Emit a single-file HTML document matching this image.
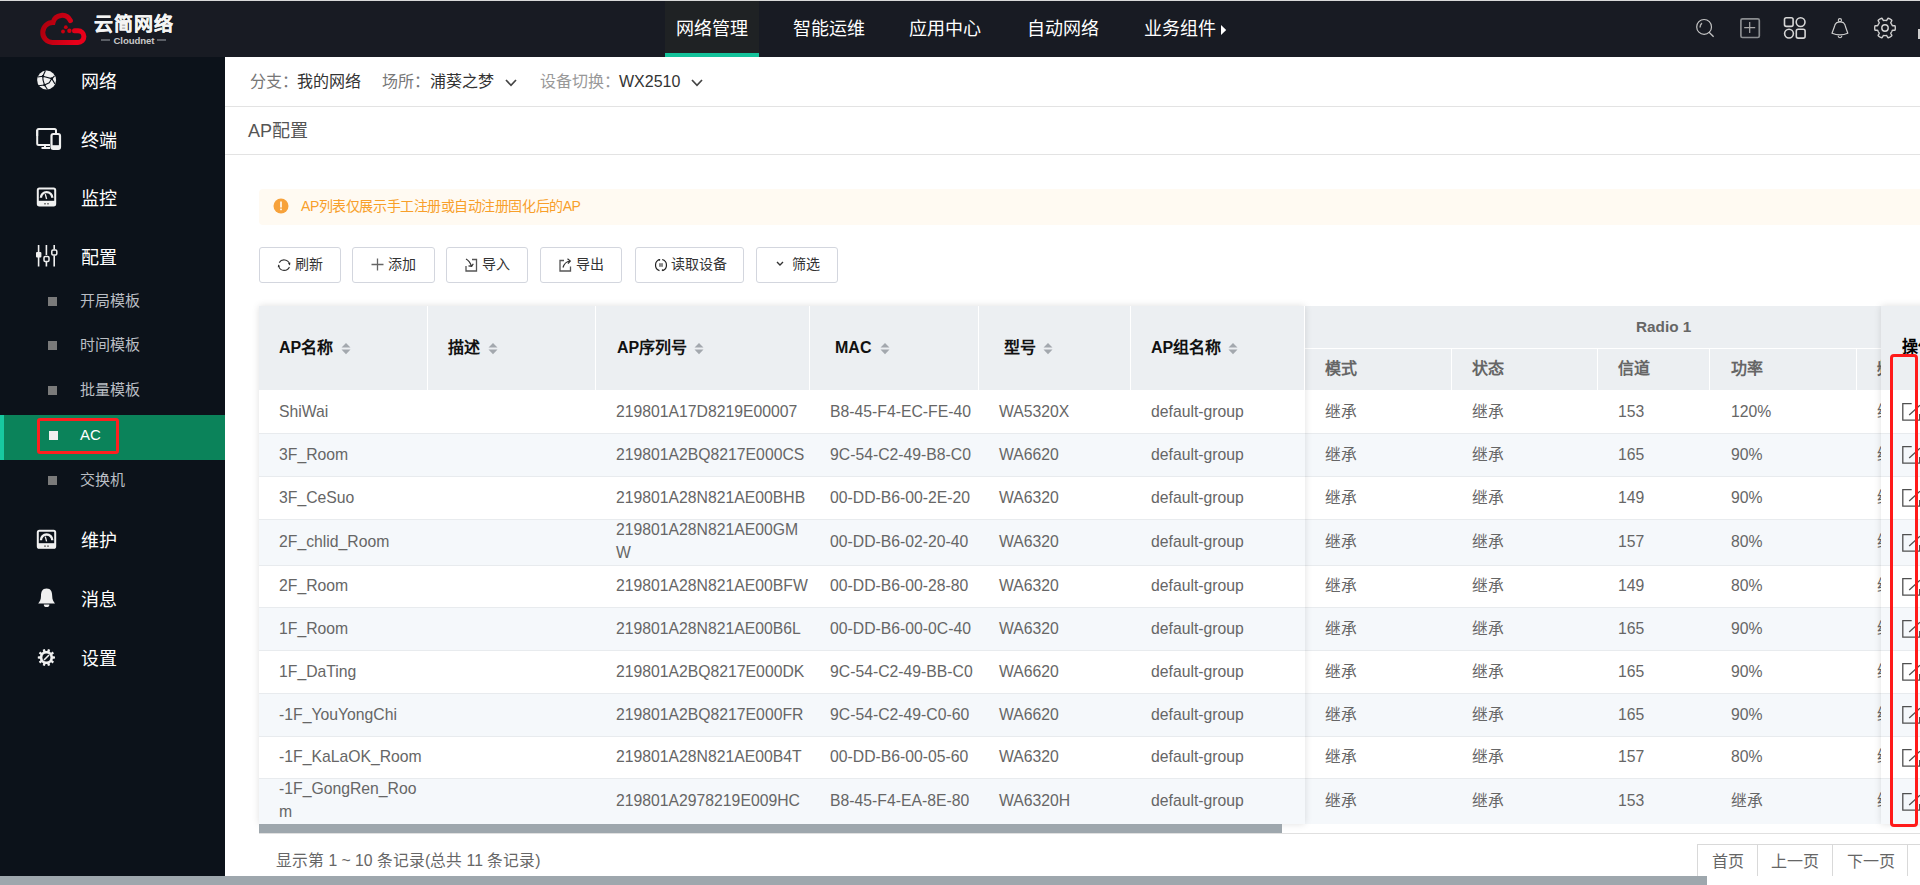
<!DOCTYPE html>
<html lang="zh-CN"><head><meta charset="utf-8"><style>
*{box-sizing:border-box;margin:0;padding:0}
html,body{width:1920px;height:885px;overflow:hidden;background:#fff;font-family:"Liberation Sans",sans-serif}
.a{position:absolute;white-space:nowrap}
.nav{font-size:18px;color:#fff;line-height:20px}
.mi{font-size:18px;color:#fff;line-height:20px}
.si{font-size:15px;color:#babec4;line-height:20px}
.bul{width:8px;height:8px;background:#777}
.bc{font-size:16px;line-height:20px}
.btn{height:36px;border:1px solid #d3d6de;border-radius:3px;background:#fff}
.bt{font-size:14px;color:#333;line-height:20px}
.hd{font-size:16px;font-weight:bold;color:#111;line-height:20px}
.hs{font-size:16px;font-weight:bold;color:#666;line-height:20px}
.c{font-size:15.75px;color:#666;line-height:20px}
.c2{font-size:15.75px;color:#666;line-height:22.5px}
</style></head><body>
<div class="a" style="left:0px;top:0px;width:1920px;height:1px;background:#d9d9d9"></div>
<div class="a" style="left:0px;top:1px;width:1920px;height:56px;background:#181b23"></div>
<svg class="a" style="left:36px;top:9px;" width="54" height="40" viewBox="36 9 54 40"><defs><linearGradient id="lg" x1="0" y1="0" x2="1" y2="0.3"><stop offset="0" stop-color="#a8000c"/><stop offset="1" stop-color="#e8001a"/></linearGradient></defs><path d="M70.4,20.6 A9.3,9.3 0 0 0 53,22.5 A10,10 0 0 0 52.5,42.5 L78,42.5 A5.9,5.9 0 0 0 78,30.7 L74.5,30.7" fill="none" stroke="url(#lg)" stroke-width="5" stroke-linecap="round"/><circle cx="63" cy="31.5" r="1.9" fill="#c8000f"/><circle cx="65.8" cy="27.2" r="1.9" fill="#c8000f"/><circle cx="69.4" cy="30.8" r="2.2" fill="#d0000f"/></svg>
<div class="a " style="left:93.5px;top:13.5px;font-size:19px;font-weight:bold;color:#f4f4f4;line-height:22px;letter-spacing:1.2px;-webkit-text-stroke:0.2px #f4f4f4">云简网络</div>
<div class="a" style="left:101px;top:39px;width:9px;height:2px;background:#5b5f66"></div>
<div class="a" style="left:157px;top:39px;width:9px;height:2px;background:#5b5f66"></div>
<div class="a " style="left:113.5px;top:34.5px;font-size:9.6px;font-weight:bold;color:#c8c8c8;line-height:12px;letter-spacing:-0.1px">Cloudnet</div>
<div class="a" style="left:665px;top:1px;width:94px;height:56px;background:#1f2224"></div>
<div class="a" style="left:665px;top:53px;width:94px;height:4px;background:#13c29a"></div>
<div class="a nav" style="left:676px;top:19px;">网络管理</div>
<div class="a nav" style="left:793px;top:19px;">智能运维</div>
<div class="a nav" style="left:909px;top:19px;">应用中心</div>
<div class="a nav" style="left:1027px;top:19px;">自动网络</div>
<div class="a nav" style="left:1144px;top:19px;">业务组件</div>
<svg class="a" style="left:1220px;top:24px;" width="9" height="12" viewBox="0 0 9 12"><path d="M1,1 L6.2,5.9 L1,11 Z" fill="#fff"/></svg>
<svg class="a" style="left:1690px;top:10px;" width="230" height="40" viewBox="1690 10 230 40"><circle cx="1704.1" cy="26.9" r="7.4" style="fill:none;stroke:#c4c4c4;stroke-width:1.2"/><path d="M1708.8,32 L1713.6,36.7" style="fill:none;stroke:#c4c4c4;stroke-width:1.3"/><path d="M1700,27.5 Q1700.2,24.4 1702,23.2" style="fill:none;stroke:#b0b0b0;stroke-width:1.4"/><rect x="1740.9" y="18.9" width="18.4" height="18.6" rx="1.6" style="fill:none;stroke:#8a8d90;stroke-width:1.7"/><path d="M1744.2,27.7 H1755.2 M1749.7,22.1 V32.9" style="fill:none;stroke:#a8a8a8;stroke-width:1.2"/><rect x="1784.5" y="17.8" width="8.6" height="8.6" rx="1.8" style="fill:none;stroke:#d6d6d6;stroke-width:1.4;stroke-width:1.6"/><circle cx="1800.6" cy="22.1" r="4.4" style="fill:none;stroke:#d6d6d6;stroke-width:1.4;stroke-width:1.6"/><circle cx="1789" cy="33.6" r="4.4" style="fill:none;stroke:#d6d6d6;stroke-width:1.4;stroke-width:1.6"/><rect x="1796.3" y="29.3" width="8.8" height="8.8" rx="1.8" style="fill:none;stroke:#d6d6d6;stroke-width:1.4;stroke-width:1.6"/><path d="M1836.8,22.6 Q1840,21.2 1843.4,22.6 Q1845.2,24 1845.6,27 L1847.8,33.2 Q1840,36.6 1832,33.2 L1834.3,27 Q1834.8,24 1836.8,22.6 Z" style="fill:none;stroke:#cfcfcf;stroke-width:1.2;stroke-linejoin:round"/><circle cx="1839.9" cy="20.2" r="1.6" style="fill:none;stroke:#cfcfcf;stroke-width:1.1"/><path d="M1838.1,35.8 A1.9,1.9 0 0 0 1841.9,35.8" style="fill:none;stroke:#cfcfcf;stroke-width:1.1"/><circle cx="1885" cy="28" r="3.2" style="fill:none;stroke:#d6d6d6;stroke-width:1.4;stroke-width:1.4"/></svg>
<svg class="a" style="left:1870px;top:14px;" width="30" height="28" viewBox="1870 14 30 28"><path d="M1895.30,28.00 L1895.30,28.27 L1895.29,28.54 L1895.27,28.81 L1895.24,29.08 L1895.21,29.34 L1895.17,29.61 L1895.10,29.87 L1894.96,30.12 L1894.56,30.30 L1893.65,30.32 L1892.73,30.29 L1892.34,30.38 L1892.19,30.55 L1892.10,30.73 L1892.02,30.91 L1891.94,31.09 L1891.86,31.27 L1891.77,31.45 L1891.68,31.63 L1891.58,31.80 L1891.48,31.97 L1891.37,32.14 L1891.26,32.30 L1891.15,32.47 L1891.03,32.63 L1890.91,32.79 L1890.80,32.95 L1890.74,33.16 L1890.85,33.55 L1891.33,34.33 L1891.77,35.13 L1891.81,35.57 L1891.67,35.81 L1891.48,36.00 L1891.27,36.17 L1891.05,36.33 L1890.83,36.49 L1890.61,36.64 L1890.38,36.78 L1890.15,36.92 L1889.91,37.05 L1889.68,37.18 L1889.43,37.30 L1889.19,37.41 L1888.94,37.51 L1888.69,37.61 L1888.43,37.68 L1888.15,37.68 L1887.79,37.43 L1887.32,36.65 L1886.88,35.84 L1886.60,35.55 L1886.39,35.50 L1886.19,35.51 L1885.99,35.54 L1885.79,35.56 L1885.60,35.58 L1885.40,35.59 L1885.20,35.60 L1885.00,35.60 L1884.80,35.60 L1884.60,35.59 L1884.40,35.58 L1884.21,35.56 L1884.01,35.54 L1883.81,35.51 L1883.61,35.50 L1883.40,35.55 L1883.12,35.84 L1882.68,36.65 L1882.21,37.43 L1881.85,37.68 L1881.57,37.68 L1881.31,37.61 L1881.06,37.51 L1880.81,37.41 L1880.57,37.30 L1880.32,37.18 L1880.09,37.05 L1879.85,36.92 L1879.62,36.78 L1879.39,36.64 L1879.17,36.49 L1878.95,36.33 L1878.73,36.17 L1878.52,36.00 L1878.33,35.81 L1878.19,35.57 L1878.23,35.13 L1878.67,34.33 L1879.15,33.55 L1879.26,33.16 L1879.20,32.95 L1879.09,32.79 L1878.97,32.63 L1878.85,32.47 L1878.74,32.30 L1878.63,32.14 L1878.52,31.97 L1878.42,31.80 L1878.32,31.63 L1878.23,31.45 L1878.14,31.27 L1878.06,31.09 L1877.98,30.91 L1877.90,30.73 L1877.81,30.55 L1877.66,30.38 L1877.27,30.29 L1876.35,30.32 L1875.44,30.30 L1875.04,30.12 L1874.90,29.87 L1874.83,29.61 L1874.79,29.34 L1874.76,29.08 L1874.73,28.81 L1874.71,28.54 L1874.70,28.27 L1874.70,28.00 L1874.70,27.73 L1874.71,27.46 L1874.73,27.19 L1874.76,26.92 L1874.79,26.66 L1874.83,26.39 L1874.90,26.13 L1875.04,25.88 L1875.44,25.70 L1876.35,25.68 L1877.27,25.71 L1877.66,25.62 L1877.81,25.45 L1877.90,25.27 L1877.98,25.09 L1878.06,24.91 L1878.14,24.73 L1878.23,24.55 L1878.32,24.37 L1878.42,24.20 L1878.52,24.03 L1878.63,23.86 L1878.74,23.70 L1878.85,23.53 L1878.97,23.37 L1879.09,23.21 L1879.20,23.05 L1879.26,22.84 L1879.15,22.45 L1878.67,21.67 L1878.23,20.87 L1878.19,20.43 L1878.33,20.19 L1878.52,20.00 L1878.73,19.83 L1878.95,19.67 L1879.17,19.51 L1879.39,19.36 L1879.62,19.22 L1879.85,19.08 L1880.09,18.95 L1880.32,18.82 L1880.57,18.70 L1880.81,18.59 L1881.06,18.49 L1881.31,18.39 L1881.57,18.32 L1881.85,18.32 L1882.21,18.57 L1882.68,19.35 L1883.12,20.16 L1883.40,20.45 L1883.61,20.50 L1883.81,20.49 L1884.01,20.46 L1884.21,20.44 L1884.40,20.42 L1884.60,20.41 L1884.80,20.40 L1885.00,20.40 L1885.20,20.40 L1885.40,20.41 L1885.60,20.42 L1885.79,20.44 L1885.99,20.46 L1886.19,20.49 L1886.39,20.50 L1886.60,20.45 L1886.88,20.16 L1887.32,19.35 L1887.79,18.57 L1888.15,18.32 L1888.43,18.32 L1888.69,18.39 L1888.94,18.49 L1889.19,18.59 L1889.43,18.70 L1889.68,18.82 L1889.91,18.95 L1890.15,19.08 L1890.38,19.22 L1890.61,19.36 L1890.83,19.51 L1891.05,19.67 L1891.27,19.83 L1891.48,20.00 L1891.67,20.19 L1891.81,20.43 L1891.77,20.87 L1891.33,21.67 L1890.85,22.45 L1890.74,22.84 L1890.80,23.05 L1890.91,23.21 L1891.03,23.37 L1891.15,23.53 L1891.26,23.70 L1891.37,23.86 L1891.48,24.03 L1891.58,24.20 L1891.68,24.37 L1891.77,24.55 L1891.86,24.73 L1891.94,24.91 L1892.02,25.09 L1892.10,25.27 L1892.19,25.45 L1892.34,25.62 L1892.73,25.71 L1893.65,25.68 L1894.56,25.70 L1894.96,25.88 L1895.10,26.13 L1895.17,26.39 L1895.21,26.66 L1895.24,26.92 L1895.27,27.19 L1895.29,27.46 L1895.30,27.73Z" style="fill:none;stroke:#cfcfcf;stroke-width:1.4"/></svg>
<div class="a" style="left:1918px;top:29px;width:2px;height:10px;background:#ccc"></div>
<div class="a" style="left:0px;top:57px;width:225px;height:828px;background:#0c121a"></div>
<svg class="a" style="left:34px;top:68px;" width="26" height="26" viewBox="34 68 26 26"><circle cx="46.6" cy="80.1" r="9.5" fill="#f0f0f0"/><path d="M42.8,76.3 L51.8,78.6 L49.2,82.8 L44.5,85 L43,80 Z M42.8,76.3 L45.3,71 M42.8,76.3 L37.5,77 M51.8,78.6 L54.5,76 M51.8,78.6 L55,84 M44.5,85 L38.3,85.8 M44.5,85 L47.5,89.5" fill="none" stroke="#0c121a" stroke-width="1.1"/><circle cx="43" cy="76.3" r="1.3" fill="#0c121a"/><circle cx="51.8" cy="78.6" r="1.3" fill="#0c121a"/><circle cx="44.5" cy="85" r="1.2" fill="#0c121a"/></svg>
<svg class="a" style="left:33px;top:126px;" width="30" height="26" viewBox="33 126 30 26"><path d="M37.2,136 V130.5 Q37.2,129 38.7,129 H54.5 Q56,129 56,130.5 V133.5" fill="none" stroke="#f0f0f0" stroke-width="2"/><path d="M37.2,130 V143.5 Q37.2,145 38.7,145 H50" fill="none" stroke="#f0f0f0" stroke-width="2"/><path d="M45,145 V147.5 M41.5,148 H50" fill="none" stroke="#f0f0f0" stroke-width="2"/><rect x="51.5" y="134" width="8.5" height="14.8" rx="1.8" fill="none" stroke="#f0f0f0" stroke-width="2.2"/><rect x="51.5" y="145.2" width="8.5" height="3.6" fill="#f0f0f0"/></svg>
<svg class="a" style="left:33px;top:184px;" width="28" height="26" viewBox="33 184 28 26"><rect x="37.8" y="188.4" width="17.4" height="17" rx="1.6" fill="none" stroke="#f0f0f0" stroke-width="2"/><rect x="37.8" y="200.8" width="17.4" height="5" fill="#f0f0f0"/><path d="M40.9,197.8 A5.7,5.7 0 0 1 52.3,197.8" fill="none" stroke="#f0f0f0" stroke-width="2.4"/><path d="M46.6,199.0 L45.3,194.20000000000002" stroke="#f0f0f0" stroke-width="1.3"/><rect x="44.2" y="203.0" width="1.6" height="1.5" fill="#666"/><rect x="47.2" y="203.0" width="1.6" height="1.5" fill="#666"/></svg>
<svg class="a" style="left:33px;top:527px;" width="28" height="26" viewBox="33 527 28 26"><rect x="37.8" y="530.8" width="17.4" height="17" rx="1.6" fill="none" stroke="#f0f0f0" stroke-width="2"/><rect x="37.8" y="543.1999999999999" width="17.4" height="5" fill="#f0f0f0"/><path d="M40.9,540.1999999999999 A5.7,5.7 0 0 1 52.3,540.1999999999999" fill="none" stroke="#f0f0f0" stroke-width="2.4"/><path d="M46.6,541.4 L45.3,536.5999999999999" stroke="#f0f0f0" stroke-width="1.3"/><rect x="44.2" y="545.4" width="1.6" height="1.5" fill="#666"/><rect x="47.2" y="545.4" width="1.6" height="1.5" fill="#666"/></svg>
<svg class="a" style="left:33px;top:242px;" width="28" height="28" viewBox="33 242 28 28"><path d="M38.6,245 V266.5 M46.4,245 V255 M46.4,261 V266.5 M54.2,245 V249.5 M54.2,255.5 V266.5" stroke="#f0f0f0" stroke-width="1.6"/><rect x="36" y="252" width="5.4" height="5.4" rx="1" fill="#f0f0f0"/><rect x="44" y="256.5" width="5" height="5" rx="1.2" fill="none" stroke="#f0f0f0" stroke-width="1.5"/><rect x="51.8" y="250" width="5" height="5" rx="1.2" fill="none" stroke="#f0f0f0" stroke-width="1.5"/></svg>
<svg class="a" style="left:34px;top:586px;" width="24" height="24" viewBox="34 586 24 24"><path d="M46.6,588.5 C51,588.5 52.2,592 52.2,596 C52.2,600 53.5,601.5 55,603.5 L38.2,603.5 C39.7,601.5 41,600 41,596 C41,592 42.2,588.5 46.6,588.5 Z" fill="#f0f0f0"/><path d="M43.8,604.5 A2.8,2.6 0 0 0 49.4,604.5 Z" fill="#f0f0f0"/></svg>
<svg class="a" style="left:34px;top:647px;" width="26" height="22" viewBox="34 647 26 22"><path d="M55.00,657.50 L55.00,657.73 L54.99,657.95 L54.97,658.17 L54.95,658.40 L54.91,658.62 L53.91,658.69 L52.91,658.71 L52.86,658.87 L52.82,659.04 L52.78,659.21 L52.73,659.37 L52.68,659.54 L52.62,659.70 L52.56,659.87 L52.50,660.03 L52.43,660.18 L52.37,660.35 L53.17,660.95 L53.94,661.59 L53.85,661.80 L53.73,661.99 L53.61,662.18 L53.49,662.37 L53.36,662.55 L53.22,662.74 L53.08,662.91 L52.94,663.09 L52.79,663.25 L52.62,663.41 L51.77,662.87 L50.96,662.30 L50.82,662.40 L50.69,662.52 L50.55,662.63 L50.42,662.74 L50.28,662.84 L50.14,662.94 L49.99,663.04 L49.85,663.13 L49.70,663.22 L49.56,663.32 L49.85,664.27 L50.09,665.25 L49.90,665.36 L49.69,665.45 L49.48,665.53 L49.27,665.61 L49.06,665.68 L48.84,665.75 L48.63,665.81 L48.41,665.86 L48.19,665.91 L47.96,665.94 L47.59,665.01 L47.26,664.06 L47.09,664.06 L46.92,664.08 L46.75,664.09 L46.57,664.10 L46.40,664.10 L46.23,664.10 L46.05,664.09 L45.88,664.08 L45.71,664.06 L45.54,664.06 L45.21,665.01 L44.84,665.94 L44.61,665.91 L44.39,665.86 L44.17,665.81 L43.96,665.75 L43.74,665.68 L43.53,665.61 L43.32,665.53 L43.11,665.45 L42.90,665.36 L42.71,665.25 L42.95,664.27 L43.24,663.32 L43.10,663.22 L42.95,663.13 L42.81,663.04 L42.66,662.94 L42.52,662.84 L42.38,662.74 L42.25,662.63 L42.11,662.52 L41.98,662.40 L41.84,662.30 L41.03,662.87 L40.18,663.41 L40.01,663.25 L39.86,663.09 L39.72,662.91 L39.58,662.74 L39.44,662.55 L39.31,662.37 L39.19,662.18 L39.07,661.99 L38.95,661.80 L38.86,661.59 L39.63,660.95 L40.43,660.35 L40.37,660.18 L40.30,660.03 L40.24,659.87 L40.18,659.70 L40.12,659.54 L40.07,659.37 L40.02,659.21 L39.98,659.04 L39.94,658.87 L39.89,658.71 L38.89,658.69 L37.89,658.62 L37.85,658.40 L37.83,658.17 L37.81,657.95 L37.80,657.73 L37.80,657.50 L37.80,657.27 L37.81,657.05 L37.83,656.83 L37.85,656.60 L37.89,656.38 L38.89,656.31 L39.89,656.29 L39.94,656.13 L39.98,655.96 L40.02,655.79 L40.07,655.63 L40.12,655.46 L40.18,655.30 L40.24,655.13 L40.30,654.97 L40.37,654.82 L40.43,654.65 L39.63,654.05 L38.86,653.41 L38.95,653.20 L39.07,653.01 L39.19,652.82 L39.31,652.63 L39.44,652.45 L39.58,652.26 L39.72,652.09 L39.86,651.91 L40.01,651.75 L40.18,651.59 L41.03,652.13 L41.84,652.70 L41.98,652.60 L42.11,652.48 L42.25,652.37 L42.38,652.26 L42.52,652.16 L42.66,652.06 L42.81,651.96 L42.95,651.87 L43.10,651.78 L43.24,651.68 L42.95,650.73 L42.71,649.75 L42.90,649.64 L43.11,649.55 L43.32,649.47 L43.53,649.39 L43.74,649.32 L43.96,649.25 L44.17,649.19 L44.39,649.14 L44.61,649.09 L44.84,649.06 L45.21,649.99 L45.54,650.94 L45.71,650.94 L45.88,650.92 L46.05,650.91 L46.23,650.90 L46.40,650.90 L46.57,650.90 L46.75,650.91 L46.92,650.92 L47.09,650.94 L47.26,650.94 L47.59,649.99 L47.96,649.06 L48.19,649.09 L48.41,649.14 L48.63,649.19 L48.84,649.25 L49.06,649.32 L49.27,649.39 L49.48,649.47 L49.69,649.55 L49.90,649.64 L50.09,649.75 L49.85,650.73 L49.56,651.68 L49.70,651.78 L49.85,651.87 L49.99,651.96 L50.14,652.06 L50.28,652.16 L50.42,652.26 L50.55,652.37 L50.69,652.48 L50.82,652.60 L50.96,652.70 L51.77,652.13 L52.62,651.59 L52.79,651.75 L52.94,651.91 L53.08,652.09 L53.22,652.26 L53.36,652.45 L53.49,652.63 L53.61,652.82 L53.73,653.01 L53.85,653.20 L53.94,653.41 L53.17,654.05 L52.37,654.65 L52.43,654.82 L52.50,654.97 L52.56,655.13 L52.62,655.30 L52.68,655.46 L52.73,655.63 L52.78,655.79 L52.82,655.96 L52.86,656.13 L52.91,656.29 L53.91,656.31 L54.91,656.38 L54.95,656.60 L54.97,656.83 L54.99,657.05 L55.00,657.27Z" fill="#f0f0f0"/><circle cx="46.4" cy="657.5" r="4" fill="#0c121a"/><path d="M44,660 L49,655" stroke="#f0f0f0" stroke-width="1.6"/></svg>
<div class="a mi" style="left:81px;top:72px;">网络</div>
<div class="a mi" style="left:81px;top:131px;">终端</div>
<div class="a mi" style="left:81px;top:189px;">监控</div>
<div class="a mi" style="left:81px;top:248px;">配置</div>
<div class="a mi" style="left:81px;top:531px;">维护</div>
<div class="a mi" style="left:81px;top:590px;">消息</div>
<div class="a mi" style="left:81px;top:649px;">设置</div>
<div class="a" style="left:0px;top:415px;width:225px;height:45px;background:#0b835a"></div>
<div class="a" style="left:0px;top:415px;width:4px;height:45px;background:#18c9a0"></div>
<div class="a" style="left:48px;top:297px;width:9px;height:9px;background:#7a7a7a"></div>
<div class="a si" style="left:80px;top:291px;">开局模板</div>
<div class="a" style="left:48px;top:341px;width:9px;height:9px;background:#7a7a7a"></div>
<div class="a si" style="left:80px;top:335px;">时间模板</div>
<div class="a" style="left:48px;top:386px;width:9px;height:9px;background:#7a7a7a"></div>
<div class="a si" style="left:80px;top:380px;">批量模板</div>
<div class="a" style="left:48px;top:476px;width:9px;height:9px;background:#7a7a7a"></div>
<div class="a si" style="left:80px;top:470px;">交换机</div>
<div class="a" style="left:49px;top:431px;width:9px;height:9px;background:#f0f0f0"></div>
<div class="a si" style="left:80px;top:425px;color:#fff">AC</div>
<div class="a" style="left:37px;top:418px;width:82px;height:36px;border:3px solid #ff1f1f;border-radius:3px"></div>
<div class="a" style="left:225px;top:57px;width:1695px;height:49px;background:#fff"></div>
<div class="a" style="left:225px;top:106px;width:1695px;height:1px;background:#e3e3e3"></div>
<div class="a bc" style="left:250px;top:72px;color:#777">分支：</div>
<div class="a bc" style="left:297px;top:72px;color:#333">我的网络</div>
<div class="a bc" style="left:382px;top:72px;color:#777">场所：</div>
<div class="a bc" style="left:430px;top:72px;color:#333">浦葵之梦</div>
<div class="a bc" style="left:540px;top:72px;color:#999">设备切换：</div>
<div class="a bc" style="left:619px;top:72px;color:#333">WX2510</div>
<svg class="a" style="left:505px;top:78.5px;" width="12" height="8" viewBox="0 0 12 8"><path d="M1,1 L6,6.3 L11,1" fill="none" stroke="#444" stroke-width="1.7"/></svg>
<svg class="a" style="left:691px;top:78.5px;" width="12" height="8" viewBox="0 0 12 8"><path d="M1,1 L6,6.3 L11,1" fill="none" stroke="#444" stroke-width="1.7"/></svg>
<div class="a " style="left:248px;top:121px;font-size:18px;color:#555;line-height:20px">AP配置</div>
<div class="a" style="left:225px;top:154px;width:1695px;height:1px;background:#e3e3e3"></div>
<div class="a" style="left:259px;top:189px;width:1670px;height:36px;background:#fffaf2;border-radius:4px"></div>
<svg class="a" style="left:273px;top:198px;" width="16" height="16" viewBox="0 0 16 16"><circle cx="8" cy="8" r="7.5" fill="#f7a23b"/><rect x="7.2" y="3.5" width="1.6" height="6" fill="#fff"/><rect x="7.2" y="10.6" width="1.6" height="1.6" fill="#fff"/></svg>
<div class="a " style="left:301px;top:196px;font-size:14px;letter-spacing:-0.45px;color:#f89f2a;line-height:20px">AP列表仅展示手工注册或自动注册固化后的AP</div>
<div class="a" style="left:259px;top:247px;width:82px;height:36px;border:1px solid #d3d6de;border-radius:3px"></div>
<div class="a" style="left:352px;top:247px;width:83px;height:36px;border:1px solid #d3d6de;border-radius:3px"></div>
<div class="a" style="left:446px;top:247px;width:82px;height:36px;border:1px solid #d3d6de;border-radius:3px"></div>
<div class="a" style="left:540px;top:247px;width:82px;height:36px;border:1px solid #d3d6de;border-radius:3px"></div>
<div class="a" style="left:635px;top:247px;width:109px;height:36px;border:1px solid #d3d6de;border-radius:3px"></div>
<div class="a" style="left:756px;top:247px;width:82px;height:36px;border:1px solid #d3d6de;border-radius:3px"></div>
<svg class="a" style="left:277px;top:258px;" width="14" height="14" viewBox="0 0 14 14"><path d="M12.6,6.2 A5.7,5.7 0 0 0 2.2,4.6" fill="none" stroke="#333" stroke-width="1.1"/><path d="M1.8,8.6 A5.7,5.7 0 0 0 12.4,9" fill="none" stroke="#333" stroke-width="1.1"/><path d="M11,5.6 L13.4,4.6 L13,7.4 Z" fill="#222"/><path d="M3.2,8.2 L0.8,9.2 L1.2,6.4 Z" fill="#222"/></svg>
<svg class="a" style="left:371px;top:258px;" width="14" height="14" viewBox="0 0 14 14"><path d="M6.5,0.5 V12.5 M0.5,6.5 H12.5" stroke="#666" stroke-width="1.3"/></svg>
<svg class="a" style="left:465px;top:258px;" width="14" height="14" viewBox="0 0 14 14"><path d="M7,1.5 H11.5 V13 H1 V8" fill="none" stroke="#555" stroke-width="1.3"/><path d="M1,1 C3,2 5,4 6.5,8 M3.5,7.8 L6.7,8.4 L8.3,5.8" fill="none" stroke="#333" stroke-width="1.2"/></svg>
<svg class="a" style="left:559px;top:258px;" width="14" height="14" viewBox="0 0 14 14"><path d="M5,2.5 H1 V13 H11.5 V8.5" fill="none" stroke="#555" stroke-width="1.3"/><path d="M4,9.5 C5,6 7.5,3.5 11,3 M8.5,0.8 L11.3,3 L9,5.6" fill="none" stroke="#333" stroke-width="1.2"/></svg>
<svg class="a" style="left:654px;top:258px;" width="14" height="14" viewBox="0 0 14 14"><path d="M5.8,1.5 A5.8,5.8 0 0 0 5.5,12.6" fill="none" stroke="#222" stroke-width="1.2"/><path d="M8.2,1.5 A5.8,5.8 0 0 1 8.5,12.6" fill="none" stroke="#222" stroke-width="1.2"/><path d="M4,1.6 L6.2,0.9 L6,3 Z M10,12.4 L7.8,13.1 L8,11 Z" fill="#222"/><rect x="5" y="5.2" width="4" height="3.6" fill="#888"/></svg>
<svg class="a" style="left:776px;top:260px;" width="14" height="14" viewBox="0 0 14 14"><path d="M1,2 L4,5 L7,2" fill="none" stroke="#333" stroke-width="1.4"/></svg>
<div class="a bt" style="left:295px;top:254px;">刷新</div>
<div class="a bt" style="left:388px;top:254px;">添加</div>
<div class="a bt" style="left:482px;top:254px;">导入</div>
<div class="a bt" style="left:576px;top:254px;">导出</div>
<div class="a bt" style="left:671px;top:254px;">读取设备</div>
<div class="a bt" style="left:792px;top:254px;">筛选</div>
<div class="a" style="left:1305px;top:306px;width:576px;height:84px;background:#eceff2"></div>
<div class="a" style="left:1305px;top:390px;width:576px;height:43px;background:#fff"></div>
<div class="a" style="left:1305px;top:433px;width:576px;height:43px;background:#f5f8fb"></div>
<div class="a" style="left:1305px;top:476px;width:576px;height:43px;background:#fff"></div>
<div class="a" style="left:1305px;top:519px;width:576px;height:46px;background:#f5f8fb"></div>
<div class="a" style="left:1305px;top:565px;width:576px;height:42px;background:#fff"></div>
<div class="a" style="left:1305px;top:607px;width:576px;height:43px;background:#f5f8fb"></div>
<div class="a" style="left:1305px;top:650px;width:576px;height:43px;background:#fff"></div>
<div class="a" style="left:1305px;top:693px;width:576px;height:43px;background:#f5f8fb"></div>
<div class="a" style="left:1305px;top:736px;width:576px;height:42px;background:#fff"></div>
<div class="a" style="left:1305px;top:778px;width:576px;height:46px;background:#f5f8fb"></div>
<div class="a" style="left:1305px;top:433px;width:576px;height:1px;background:#e8ebee"></div>
<div class="a" style="left:1305px;top:476px;width:576px;height:1px;background:#e8ebee"></div>
<div class="a" style="left:1305px;top:519px;width:576px;height:1px;background:#e8ebee"></div>
<div class="a" style="left:1305px;top:565px;width:576px;height:1px;background:#e8ebee"></div>
<div class="a" style="left:1305px;top:607px;width:576px;height:1px;background:#e8ebee"></div>
<div class="a" style="left:1305px;top:650px;width:576px;height:1px;background:#e8ebee"></div>
<div class="a" style="left:1305px;top:693px;width:576px;height:1px;background:#e8ebee"></div>
<div class="a" style="left:1305px;top:736px;width:576px;height:1px;background:#e8ebee"></div>
<div class="a" style="left:1305px;top:778px;width:576px;height:1px;background:#e8ebee"></div>
<div class="a" style="left:1451px;top:348px;width:1px;height:42px;background:#fff"></div>
<div class="a" style="left:1597px;top:348px;width:1px;height:42px;background:#fff"></div>
<div class="a" style="left:1709px;top:348px;width:1px;height:42px;background:#fff"></div>
<div class="a" style="left:1856px;top:348px;width:1px;height:42px;background:#fff"></div>
<div class="a" style="left:1305px;top:348px;width:576px;height:1px;background:#fff"></div>
<div class="a hs" style="left:1636px;top:317px;font-size:15.3px">Radio 1</div>
<div class="a hs" style="left:1325px;top:359px;">模式</div>
<div class="a hs" style="left:1472px;top:359px;">状态</div>
<div class="a hs" style="left:1618px;top:359px;">信道</div>
<div class="a hs" style="left:1731px;top:359px;">功率</div>
<div class="a hs" style="left:1877px;top:359px;">频</div>
<div class="a c" style="left:1325px;top:401.5px;">继承</div>
<div class="a c" style="left:1472px;top:401.5px;">继承</div>
<div class="a c" style="left:1618px;top:401.5px;">153</div>
<div class="a c" style="left:1731px;top:401.5px;">120%</div>
<div class="a c" style="left:1877px;top:401.5px;">继</div>
<div class="a c" style="left:1325px;top:444.5px;">继承</div>
<div class="a c" style="left:1472px;top:444.5px;">继承</div>
<div class="a c" style="left:1618px;top:444.5px;">165</div>
<div class="a c" style="left:1731px;top:444.5px;">90%</div>
<div class="a c" style="left:1877px;top:444.5px;">继</div>
<div class="a c" style="left:1325px;top:487.5px;">继承</div>
<div class="a c" style="left:1472px;top:487.5px;">继承</div>
<div class="a c" style="left:1618px;top:487.5px;">149</div>
<div class="a c" style="left:1731px;top:487.5px;">90%</div>
<div class="a c" style="left:1877px;top:487.5px;">继</div>
<div class="a c" style="left:1325px;top:532.0px;">继承</div>
<div class="a c" style="left:1472px;top:532.0px;">继承</div>
<div class="a c" style="left:1618px;top:532.0px;">157</div>
<div class="a c" style="left:1731px;top:532.0px;">80%</div>
<div class="a c" style="left:1877px;top:532.0px;">继</div>
<div class="a c" style="left:1325px;top:576.0px;">继承</div>
<div class="a c" style="left:1472px;top:576.0px;">继承</div>
<div class="a c" style="left:1618px;top:576.0px;">149</div>
<div class="a c" style="left:1731px;top:576.0px;">80%</div>
<div class="a c" style="left:1877px;top:576.0px;">继</div>
<div class="a c" style="left:1325px;top:618.5px;">继承</div>
<div class="a c" style="left:1472px;top:618.5px;">继承</div>
<div class="a c" style="left:1618px;top:618.5px;">165</div>
<div class="a c" style="left:1731px;top:618.5px;">90%</div>
<div class="a c" style="left:1877px;top:618.5px;">继</div>
<div class="a c" style="left:1325px;top:661.5px;">继承</div>
<div class="a c" style="left:1472px;top:661.5px;">继承</div>
<div class="a c" style="left:1618px;top:661.5px;">165</div>
<div class="a c" style="left:1731px;top:661.5px;">90%</div>
<div class="a c" style="left:1877px;top:661.5px;">继</div>
<div class="a c" style="left:1325px;top:704.5px;">继承</div>
<div class="a c" style="left:1472px;top:704.5px;">继承</div>
<div class="a c" style="left:1618px;top:704.5px;">165</div>
<div class="a c" style="left:1731px;top:704.5px;">90%</div>
<div class="a c" style="left:1877px;top:704.5px;">继</div>
<div class="a c" style="left:1325px;top:747.0px;">继承</div>
<div class="a c" style="left:1472px;top:747.0px;">继承</div>
<div class="a c" style="left:1618px;top:747.0px;">157</div>
<div class="a c" style="left:1731px;top:747.0px;">80%</div>
<div class="a c" style="left:1877px;top:747.0px;">继</div>
<div class="a c" style="left:1325px;top:791.0px;">继承</div>
<div class="a c" style="left:1472px;top:791.0px;">继承</div>
<div class="a c" style="left:1618px;top:791.0px;">153</div>
<div class="a c" style="left:1731px;top:791.0px;">继承</div>
<div class="a c" style="left:1877px;top:791.0px;">继</div>
<div class="a" style="left:259px;top:306px;width:1046px;height:518px;background:#fff;box-shadow:0 0 7px rgba(0,0,0,0.13)"></div>
<div class="a" style="left:259px;top:306px;width:1046px;height:84px;background:#eceff2"></div>
<div class="a" style="left:259px;top:390px;width:1046px;height:43px;background:#fff"></div>
<div class="a" style="left:259px;top:433px;width:1046px;height:43px;background:#f5f8fb"></div>
<div class="a" style="left:259px;top:476px;width:1046px;height:43px;background:#fff"></div>
<div class="a" style="left:259px;top:519px;width:1046px;height:46px;background:#f5f8fb"></div>
<div class="a" style="left:259px;top:565px;width:1046px;height:42px;background:#fff"></div>
<div class="a" style="left:259px;top:607px;width:1046px;height:43px;background:#f5f8fb"></div>
<div class="a" style="left:259px;top:650px;width:1046px;height:43px;background:#fff"></div>
<div class="a" style="left:259px;top:693px;width:1046px;height:43px;background:#f5f8fb"></div>
<div class="a" style="left:259px;top:736px;width:1046px;height:42px;background:#fff"></div>
<div class="a" style="left:259px;top:778px;width:1046px;height:46px;background:#f5f8fb"></div>
<div class="a" style="left:259px;top:433px;width:1046px;height:1px;background:#e8ebee"></div>
<div class="a" style="left:259px;top:476px;width:1046px;height:1px;background:#e8ebee"></div>
<div class="a" style="left:259px;top:519px;width:1046px;height:1px;background:#e8ebee"></div>
<div class="a" style="left:259px;top:565px;width:1046px;height:1px;background:#e8ebee"></div>
<div class="a" style="left:259px;top:607px;width:1046px;height:1px;background:#e8ebee"></div>
<div class="a" style="left:259px;top:650px;width:1046px;height:1px;background:#e8ebee"></div>
<div class="a" style="left:259px;top:693px;width:1046px;height:1px;background:#e8ebee"></div>
<div class="a" style="left:259px;top:736px;width:1046px;height:1px;background:#e8ebee"></div>
<div class="a" style="left:259px;top:778px;width:1046px;height:1px;background:#e8ebee"></div>
<div class="a" style="left:427px;top:306px;width:1px;height:84px;background:#fff"></div>
<div class="a" style="left:595px;top:306px;width:1px;height:84px;background:#fff"></div>
<div class="a" style="left:809px;top:306px;width:1px;height:84px;background:#fff"></div>
<div class="a" style="left:978px;top:306px;width:1px;height:84px;background:#fff"></div>
<div class="a" style="left:1130px;top:306px;width:1px;height:84px;background:#fff"></div>
<div class="a" style="left:1304px;top:306px;width:1px;height:84px;background:#fff"></div>
<div class="a hd" style="left:279px;top:338px;">AP名称</div>
<svg class="a" style="left:341px;top:343px;" width="10" height="12" viewBox="0 0 10 12"><path d="M5,0 L9.5,4.6 H0.5 Z M0.5,6.6 H9.5 L5,11.2 Z" fill="#a3a8ae"/></svg>
<div class="a hd" style="left:448px;top:338px;">描述</div>
<svg class="a" style="left:488px;top:343px;" width="10" height="12" viewBox="0 0 10 12"><path d="M5,0 L9.5,4.6 H0.5 Z M0.5,6.6 H9.5 L5,11.2 Z" fill="#a3a8ae"/></svg>
<div class="a hd" style="left:617px;top:338px;">AP序列号</div>
<svg class="a" style="left:694px;top:343px;" width="10" height="12" viewBox="0 0 10 12"><path d="M5,0 L9.5,4.6 H0.5 Z M0.5,6.6 H9.5 L5,11.2 Z" fill="#a3a8ae"/></svg>
<div class="a hd" style="left:835px;top:338px;">MAC</div>
<svg class="a" style="left:880px;top:343px;" width="10" height="12" viewBox="0 0 10 12"><path d="M5,0 L9.5,4.6 H0.5 Z M0.5,6.6 H9.5 L5,11.2 Z" fill="#a3a8ae"/></svg>
<div class="a hd" style="left:1004px;top:338px;">型号</div>
<svg class="a" style="left:1043px;top:343px;" width="10" height="12" viewBox="0 0 10 12"><path d="M5,0 L9.5,4.6 H0.5 Z M0.5,6.6 H9.5 L5,11.2 Z" fill="#a3a8ae"/></svg>
<div class="a hd" style="left:1151px;top:338px;">AP组名称</div>
<svg class="a" style="left:1228px;top:343px;" width="10" height="12" viewBox="0 0 10 12"><path d="M5,0 L9.5,4.6 H0.5 Z M0.5,6.6 H9.5 L5,11.2 Z" fill="#a3a8ae"/></svg>
<div class="a c" style="left:279px;top:401.5px;">ShiWai</div>
<div class="a c" style="left:616px;top:401.5px;">219801A17D8219E00007</div>
<div class="a c" style="left:830px;top:401.5px;">B8-45-F4-EC-FE-40</div>
<div class="a c" style="left:999px;top:401.5px;">WA5320X</div>
<div class="a c" style="left:1151px;top:401.5px;">default-group</div>
<div class="a c" style="left:279px;top:444.5px;">3F_Room</div>
<div class="a c" style="left:616px;top:444.5px;">219801A2BQ8217E000CS</div>
<div class="a c" style="left:830px;top:444.5px;">9C-54-C2-49-B8-C0</div>
<div class="a c" style="left:999px;top:444.5px;">WA6620</div>
<div class="a c" style="left:1151px;top:444.5px;">default-group</div>
<div class="a c" style="left:279px;top:487.5px;">3F_CeSuo</div>
<div class="a c" style="left:616px;top:487.5px;">219801A28N821AE00BHB</div>
<div class="a c" style="left:830px;top:487.5px;">00-DD-B6-00-2E-20</div>
<div class="a c" style="left:999px;top:487.5px;">WA6320</div>
<div class="a c" style="left:1151px;top:487.5px;">default-group</div>
<div class="a c" style="left:279px;top:532.0px;">2F_chlid_Room</div>
<div class="a c2" style="left:616px;top:519px;">219801A28N821AE00GM<br>W</div>
<div class="a c" style="left:830px;top:532.0px;">00-DD-B6-02-20-40</div>
<div class="a c" style="left:999px;top:532.0px;">WA6320</div>
<div class="a c" style="left:1151px;top:532.0px;">default-group</div>
<div class="a c" style="left:279px;top:576.0px;">2F_Room</div>
<div class="a c" style="left:616px;top:576.0px;">219801A28N821AE00BFW</div>
<div class="a c" style="left:830px;top:576.0px;">00-DD-B6-00-28-80</div>
<div class="a c" style="left:999px;top:576.0px;">WA6320</div>
<div class="a c" style="left:1151px;top:576.0px;">default-group</div>
<div class="a c" style="left:279px;top:618.5px;">1F_Room</div>
<div class="a c" style="left:616px;top:618.5px;">219801A28N821AE00B6L</div>
<div class="a c" style="left:830px;top:618.5px;">00-DD-B6-00-0C-40</div>
<div class="a c" style="left:999px;top:618.5px;">WA6320</div>
<div class="a c" style="left:1151px;top:618.5px;">default-group</div>
<div class="a c" style="left:279px;top:661.5px;">1F_DaTing</div>
<div class="a c" style="left:616px;top:661.5px;">219801A2BQ8217E000DK</div>
<div class="a c" style="left:830px;top:661.5px;">9C-54-C2-49-BB-C0</div>
<div class="a c" style="left:999px;top:661.5px;">WA6620</div>
<div class="a c" style="left:1151px;top:661.5px;">default-group</div>
<div class="a c" style="left:279px;top:704.5px;">-1F_YouYongChi</div>
<div class="a c" style="left:616px;top:704.5px;">219801A2BQ8217E000FR</div>
<div class="a c" style="left:830px;top:704.5px;">9C-54-C2-49-C0-60</div>
<div class="a c" style="left:999px;top:704.5px;">WA6620</div>
<div class="a c" style="left:1151px;top:704.5px;">default-group</div>
<div class="a c" style="left:279px;top:747.0px;">-1F_KaLaOK_Room</div>
<div class="a c" style="left:616px;top:747.0px;">219801A28N821AE00B4T</div>
<div class="a c" style="left:830px;top:747.0px;">00-DD-B6-00-05-60</div>
<div class="a c" style="left:999px;top:747.0px;">WA6320</div>
<div class="a c" style="left:1151px;top:747.0px;">default-group</div>
<div class="a c2" style="left:279px;top:778px;">-1F_GongRen_Roo<br>m</div>
<div class="a c" style="left:616px;top:791.0px;">219801A2978219E009HC</div>
<div class="a c" style="left:830px;top:791.0px;">B8-45-F4-EA-8E-80</div>
<div class="a c" style="left:999px;top:791.0px;">WA6320H</div>
<div class="a c" style="left:1151px;top:791.0px;">default-group</div>
<div class="a" style="left:1881px;top:306px;width:60px;height:518px;background:#fff;box-shadow:0 0 7px rgba(0,0,0,0.13)"></div>
<div class="a" style="left:1881px;top:306px;width:39px;height:84px;background:#eceff2"></div>
<div class="a" style="left:1881px;top:390px;width:39px;height:43px;background:#fff"></div>
<div class="a" style="left:1881px;top:433px;width:39px;height:43px;background:#f5f8fb"></div>
<div class="a" style="left:1881px;top:476px;width:39px;height:43px;background:#fff"></div>
<div class="a" style="left:1881px;top:519px;width:39px;height:46px;background:#f5f8fb"></div>
<div class="a" style="left:1881px;top:565px;width:39px;height:42px;background:#fff"></div>
<div class="a" style="left:1881px;top:607px;width:39px;height:43px;background:#f5f8fb"></div>
<div class="a" style="left:1881px;top:650px;width:39px;height:43px;background:#fff"></div>
<div class="a" style="left:1881px;top:693px;width:39px;height:43px;background:#f5f8fb"></div>
<div class="a" style="left:1881px;top:736px;width:39px;height:42px;background:#fff"></div>
<div class="a" style="left:1881px;top:778px;width:39px;height:46px;background:#f5f8fb"></div>
<div class="a" style="left:1881px;top:433px;width:39px;height:1px;background:#e8ebee"></div>
<div class="a" style="left:1881px;top:476px;width:39px;height:1px;background:#e8ebee"></div>
<div class="a" style="left:1881px;top:519px;width:39px;height:1px;background:#e8ebee"></div>
<div class="a" style="left:1881px;top:565px;width:39px;height:1px;background:#e8ebee"></div>
<div class="a" style="left:1881px;top:607px;width:39px;height:1px;background:#e8ebee"></div>
<div class="a" style="left:1881px;top:650px;width:39px;height:1px;background:#e8ebee"></div>
<div class="a" style="left:1881px;top:693px;width:39px;height:1px;background:#e8ebee"></div>
<div class="a" style="left:1881px;top:736px;width:39px;height:1px;background:#e8ebee"></div>
<div class="a" style="left:1881px;top:778px;width:39px;height:1px;background:#e8ebee"></div>
<svg class="a" style="left:1901px;top:402.0px;" width="19" height="19" viewBox="0 0 19 19"><path d="M10.7,1.7 H1.8 V18.1 H18.7 V12" fill="none" stroke="#505050" stroke-width="1.3"/><path d="M8.2,13 L19,3.2" stroke="#505050" stroke-width="1.3"/></svg>
<svg class="a" style="left:1901px;top:445.0px;" width="19" height="19" viewBox="0 0 19 19"><path d="M10.7,1.7 H1.8 V18.1 H18.7 V12" fill="none" stroke="#505050" stroke-width="1.3"/><path d="M8.2,13 L19,3.2" stroke="#505050" stroke-width="1.3"/></svg>
<svg class="a" style="left:1901px;top:488.0px;" width="19" height="19" viewBox="0 0 19 19"><path d="M10.7,1.7 H1.8 V18.1 H18.7 V12" fill="none" stroke="#505050" stroke-width="1.3"/><path d="M8.2,13 L19,3.2" stroke="#505050" stroke-width="1.3"/></svg>
<svg class="a" style="left:1901px;top:532.5px;" width="19" height="19" viewBox="0 0 19 19"><path d="M10.7,1.7 H1.8 V18.1 H18.7 V12" fill="none" stroke="#505050" stroke-width="1.3"/><path d="M8.2,13 L19,3.2" stroke="#505050" stroke-width="1.3"/></svg>
<svg class="a" style="left:1901px;top:576.5px;" width="19" height="19" viewBox="0 0 19 19"><path d="M10.7,1.7 H1.8 V18.1 H18.7 V12" fill="none" stroke="#505050" stroke-width="1.3"/><path d="M8.2,13 L19,3.2" stroke="#505050" stroke-width="1.3"/></svg>
<svg class="a" style="left:1901px;top:619.0px;" width="19" height="19" viewBox="0 0 19 19"><path d="M10.7,1.7 H1.8 V18.1 H18.7 V12" fill="none" stroke="#505050" stroke-width="1.3"/><path d="M8.2,13 L19,3.2" stroke="#505050" stroke-width="1.3"/></svg>
<svg class="a" style="left:1901px;top:662.0px;" width="19" height="19" viewBox="0 0 19 19"><path d="M10.7,1.7 H1.8 V18.1 H18.7 V12" fill="none" stroke="#505050" stroke-width="1.3"/><path d="M8.2,13 L19,3.2" stroke="#505050" stroke-width="1.3"/></svg>
<svg class="a" style="left:1901px;top:705.0px;" width="19" height="19" viewBox="0 0 19 19"><path d="M10.7,1.7 H1.8 V18.1 H18.7 V12" fill="none" stroke="#505050" stroke-width="1.3"/><path d="M8.2,13 L19,3.2" stroke="#505050" stroke-width="1.3"/></svg>
<svg class="a" style="left:1901px;top:747.5px;" width="19" height="19" viewBox="0 0 19 19"><path d="M10.7,1.7 H1.8 V18.1 H18.7 V12" fill="none" stroke="#505050" stroke-width="1.3"/><path d="M8.2,13 L19,3.2" stroke="#505050" stroke-width="1.3"/></svg>
<svg class="a" style="left:1901px;top:791.5px;" width="19" height="19" viewBox="0 0 19 19"><path d="M10.7,1.7 H1.8 V18.1 H18.7 V12" fill="none" stroke="#505050" stroke-width="1.3"/><path d="M8.2,13 L19,3.2" stroke="#505050" stroke-width="1.3"/></svg>
<div class="a hd" style="left:1902px;top:337px;color:#000">操作</div>
<div class="a" style="left:1890px;top:354px;width:28px;height:473px;border:3px solid #ff1a1a;border-radius:4px"></div>
<div class="a" style="left:259px;top:824px;width:1023px;height:9px;background:#9ea7ad"></div>
<div class="a" style="left:259px;top:833px;width:1661px;height:1px;background:#e0e0e0"></div>
<div class="a " style="left:276px;top:851px;font-size:15.75px;color:#666;line-height:20px">显示第 1 ~ 10 条记录(总共 11 条记录)</div>
<div class="a" style="left:1697px;top:844px;width:223px;height:41px;border-left:1px solid #d9d9d9;border-top:1px solid #d9d9d9"></div>
<div class="a" style="left:1757px;top:844px;width:1px;height:41px;background:#d9d9d9"></div>
<div class="a" style="left:1832px;top:844px;width:1px;height:41px;background:#d9d9d9"></div>
<div class="a" style="left:1907px;top:844px;width:1px;height:41px;background:#d9d9d9"></div>
<div class="a " style="left:1712px;top:852px;font-size:16px;color:#666;line-height:20px">首页</div>
<div class="a " style="left:1771px;top:852px;font-size:16px;color:#666;line-height:20px">上一页</div>
<div class="a " style="left:1847px;top:852px;font-size:16px;color:#666;line-height:20px">下一页</div>
<div class="a" style="left:0px;top:876px;width:1920px;height:9px;background:#fff"></div>
<div class="a" style="left:0px;top:876px;width:1707px;height:9px;background:#9ea7ad"></div>
</body></html>
